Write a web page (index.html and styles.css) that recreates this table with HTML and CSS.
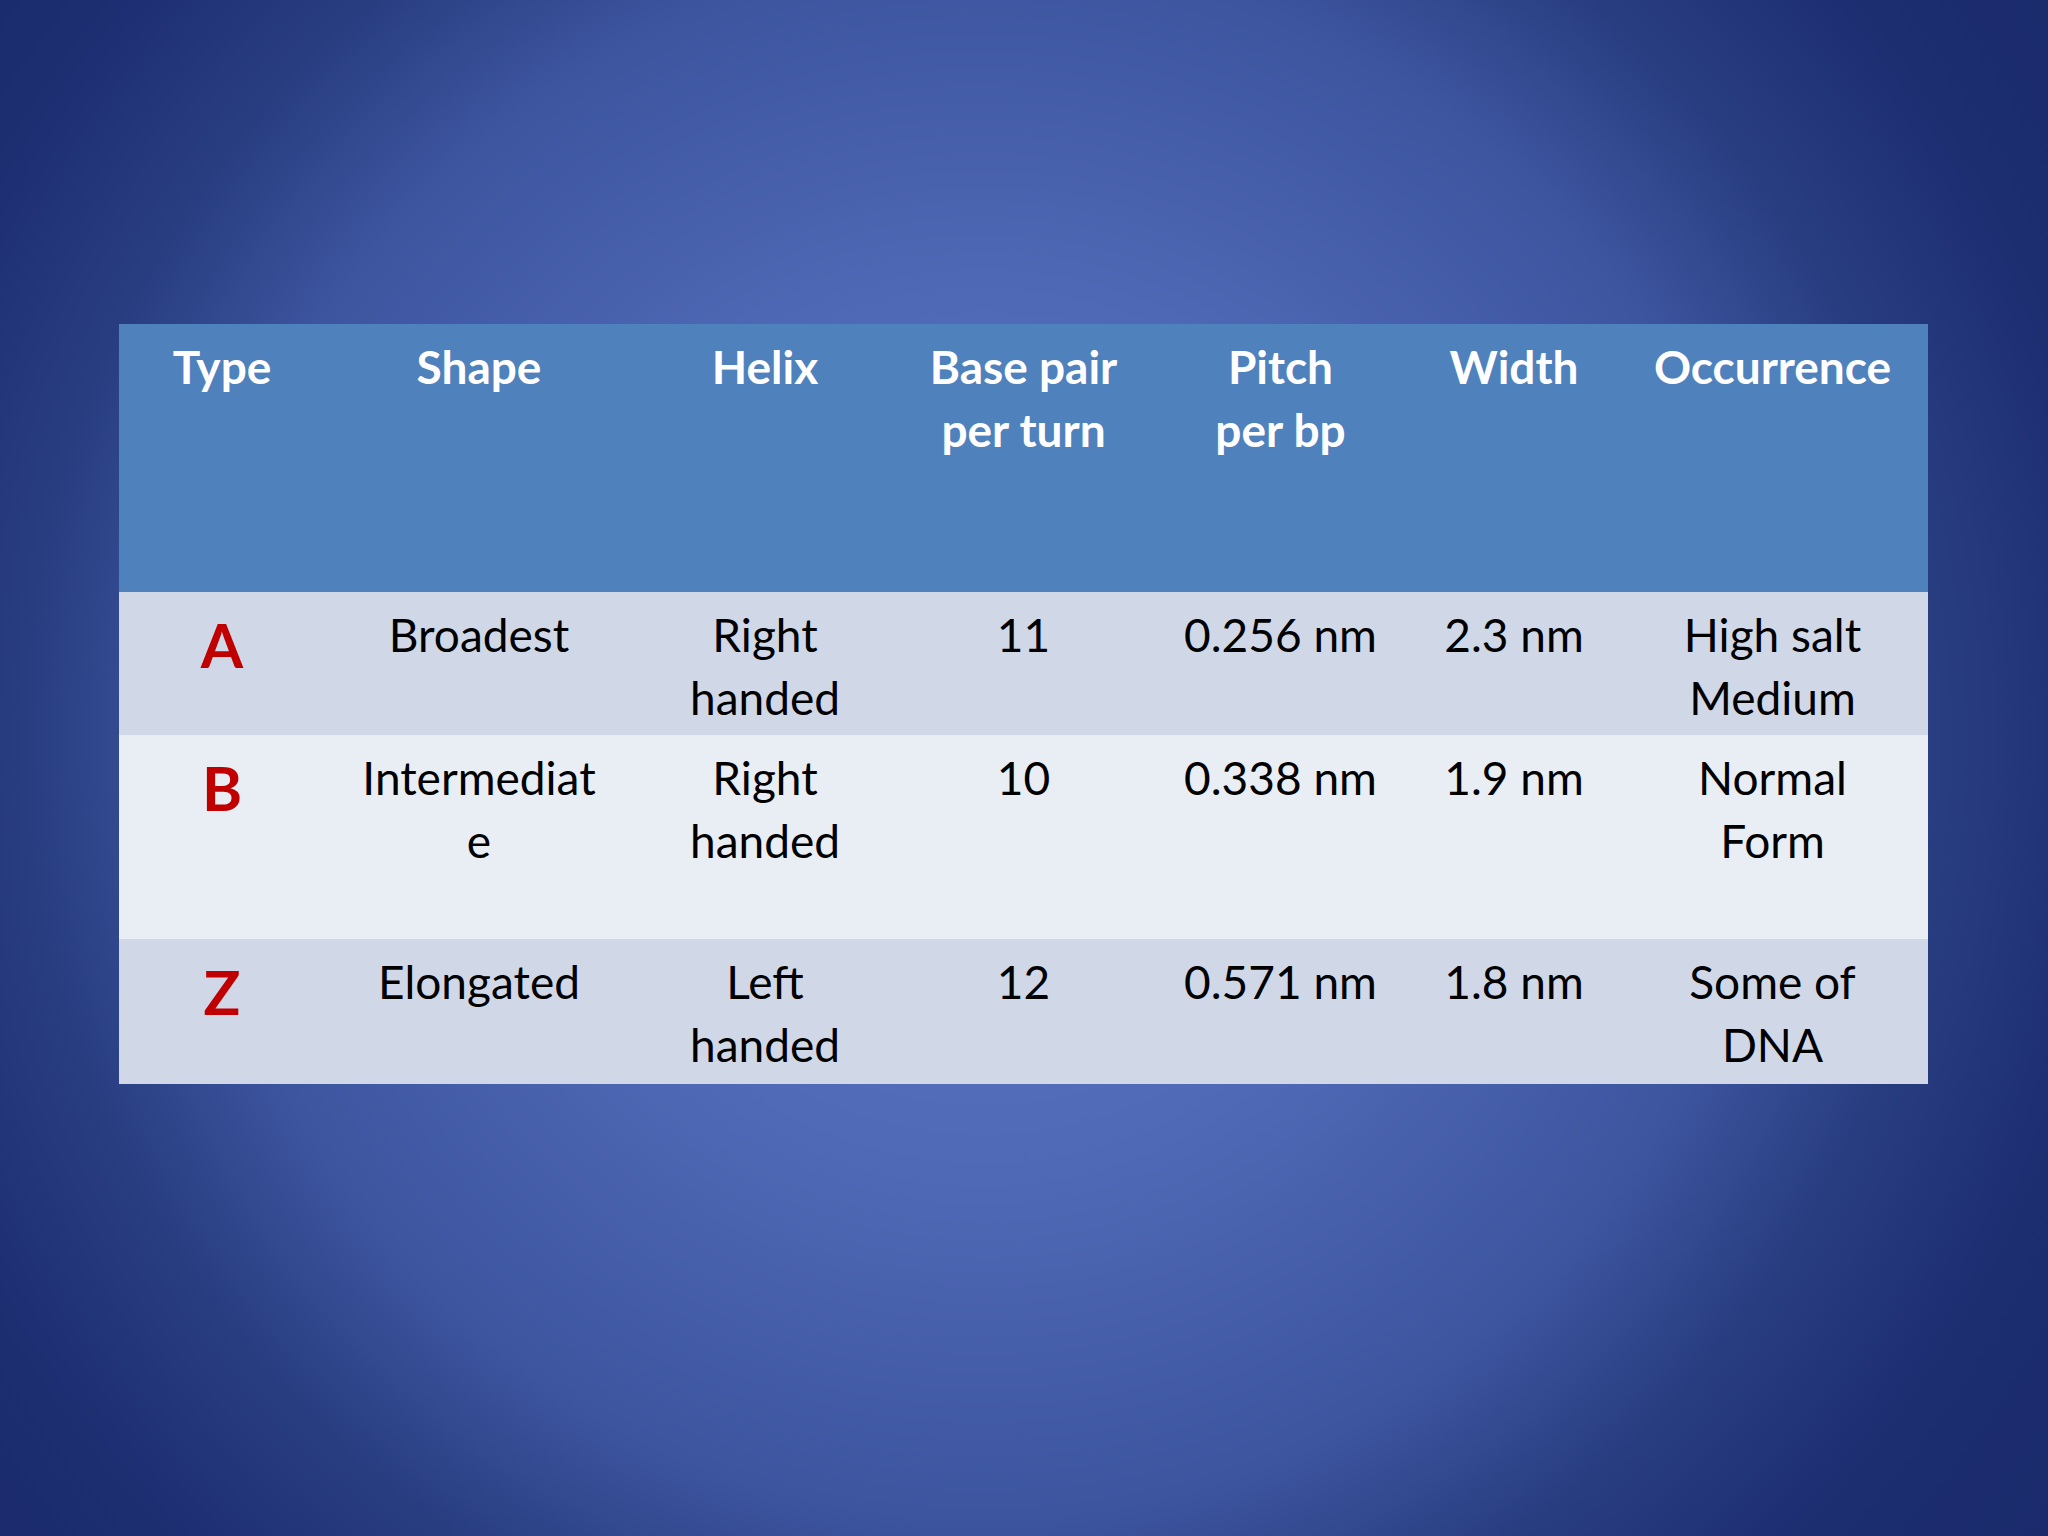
FILE: index.html
```html
<!DOCTYPE html>
<html lang="en">
<head>
<meta charset="utf-8">
<title>DNA forms</title>
<link rel="stylesheet" href="styles.css">
</head>
<body>
<main class="slide">
  <table class="dna">
    <colgroup>
      <col class="c-type">
      <col class="c-shape">
      <col class="c-helix">
      <col class="c-bp">
      <col class="c-pitch">
      <col class="c-width">
      <col class="c-occ">
    </colgroup>
    <thead>
      <tr class="head">
        <th>Type</th>
        <th>Shape</th>
        <th>Helix</th>
        <th>Base pair<br>per turn</th>
        <th>Pitch<br>per bp</th>
        <th>Width</th>
        <th>Occurrence</th>
      </tr>
    </thead>
    <tbody>
      <tr class="row-a">
        <td class="type">A</td>
        <td>Broadest</td>
        <td>Right<br>handed</td>
        <td>11</td>
        <td>0.256 nm</td>
        <td>2.3 nm</td>
        <td>High salt<br>Medium</td>
      </tr>
      <tr class="row-b">
        <td class="type">B</td>
        <td>Intermediat<br>e</td>
        <td>Right<br>handed</td>
        <td>10</td>
        <td>0.338 nm</td>
        <td>1.9 nm</td>
        <td>Normal<br>Form</td>
      </tr>
      <tr class="row-z">
        <td class="type">Z</td>
        <td>Elongated</td>
        <td>Left<br>handed</td>
        <td>12</td>
        <td>0.571 nm</td>
        <td>1.8 nm</td>
        <td>Some of<br>DNA</td>
      </tr>
    </tbody>
  </table>
</main>
</body>
</html>
```

FILE: styles.css
```css
html, body {
  margin: 0;
  padding: 0;
}

body {
  width: 2048px;
  height: 1536px;
  overflow: hidden;
  font-family: Lato, "Open Sans", "Liberation Sans", sans-serif;
  background: radial-gradient(circle at 48% 48%,
    #5c78c6 0px,
    #5069b6 440px,
    #3d559f 780px,
    #283d80 960px,
    #1c2d70 1150px,
    #1a2a6b 1350px);
}

.slide {
  box-sizing: border-box;
  width: 2048px;
  height: 1536px;
  padding: 324px 0 0 119px;
}

.dna {
  border-collapse: collapse;
  table-layout: fixed;
  width: 1809px;
}

.c-type  { width: 206px; }
.c-shape { width: 308px; }
.c-helix { width: 264px; }
.c-bp    { width: 253px; }
.c-pitch { width: 261px; }
.c-width { width: 206px; }
.c-occ   { width: 311px; }

.dna th,
.dna td {
  padding: 12px 8px 6px;
  text-align: center;
  vertical-align: top;
  font-size: 46px;
  line-height: 62.5px;
  white-space: nowrap;
}

.dna th {
  color: #ffffff;
  font-weight: 700;
  background: #4f81bd;
}

.dna td {
  color: #000000;
  font-weight: 400;
}

.head   { height: 268px; }
.row-a  { height: 143px; background: #d0d8e8; }
.row-b  { height: 204px; background: #e9edf4; }
.row-z  { height: 145px; background: #d0d8e8; }

.dna td.type {
  color: #c00000;
  font-weight: 700;
  font-size: 61px;
  line-height: 83px;
  padding-top: 11px;
}
```
